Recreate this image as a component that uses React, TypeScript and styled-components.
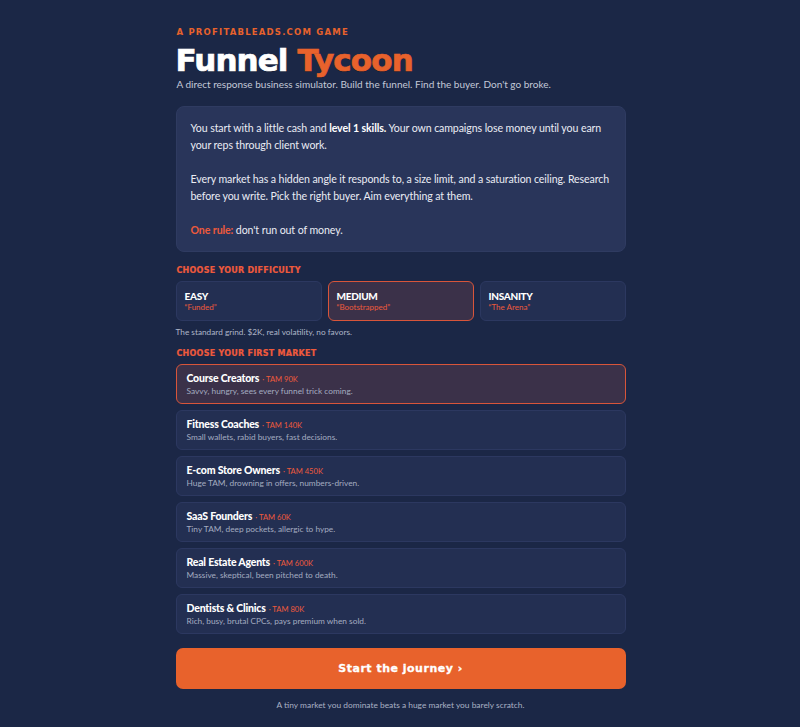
import React, { useState } from "react";
import styled, { createGlobalStyle } from "styled-components";

const GlobalStyle = createGlobalStyle`
  html, body {
    margin: 0;
    padding: 0;
    background: #1b2746;
  }
  body {
    font-family: Lato, "Noto Sans", sans-serif;
    color: #e6e9f2;
    -webkit-font-smoothing: antialiased;
  }
  * { box-sizing: border-box; }
`;

const ORANGE = "#e8622c";
const RED = "#ee5a3c";

const Page = styled.main`
  width: 451px;
  margin: 0 auto;
  padding: 26px 0 14px 1px;
  display: flex;
  flex-direction: column;
`;

const Eyebrow = styled.div`
  font-family: "DejaVu Sans", sans-serif;
  font-weight: 700;
  font-size: 8.5px;
  letter-spacing: 1.2px;
  color: ${ORANGE};
  padding-left: 1px;
  line-height: 12px;
`;

const Title = styled.h1`
  margin: 5px 0 0;
  font-family: "DejaVu Sans", sans-serif;
  font-weight: 700;
  font-size: 31px;
  line-height: 34px;
  letter-spacing: -0.9px;
  color: #ffffff;
  -webkit-text-stroke: 0.7px currentColor;
  text-shadow: 0 1px 0 rgba(0, 0, 0, 0.35);
`;

const Accent = styled.span`
  color: ${ORANGE};
`;

const Subtitle = styled.p`
  margin: 0;
  font-size: 10px;
  line-height: 14px;
  color: #c3c9d8;
  padding-left: 1px;
`;

const Intro = styled.section`
  margin-top: 15px;
  background: #29355a;
  border: 1px solid #2f3b61;
  border-radius: 8px;
  padding: 13px 14px 12px;
  font-size: 10.6px;
  line-height: 17px;
  letter-spacing: -0.1px;
  color: #e9ecf4;
`;

const IntroPara = styled.p`
  margin: 0 0 17px;
  &:last-child { margin-bottom: 0; }
`;

const Strong = styled.strong`
  font-weight: 700;
  color: #ffffff;
`;

const Rule = styled.strong`
  font-weight: 700;
  color: ${RED};
`;

const SectionLabel = styled.h2<{ $top: number }>`
  margin: ${(p) => p.$top}px 0 5px;
  font-family: "DejaVu Sans", sans-serif;
  font-weight: 700;
  font-size: 8px;
  line-height: 11px;
  letter-spacing: 0.25px;
  color: ${RED};
  padding-left: 1px;
  -webkit-text-stroke: 0.2px currentColor;
`;

const DifficultyGrid = styled.div`
  display: grid;
  grid-template-columns: repeat(3, 1fr);
  gap: 6px;
`;

const Card = styled.button<{ $active?: boolean }>`
  all: unset;
  box-sizing: border-box;
  cursor: pointer;
  display: flex;
  flex-direction: column;
  justify-content: center;
  border-radius: 6px;
  border: 1px solid ${(p) => (p.$active ? "#d8553a" : "#2c3860")};
  background: ${(p) => (p.$active ? "#3b3149" : "#232f52")};
`;

const DiffCard = styled(Card)`
  height: 40px;
  padding: 0 8px;
`;

const DiffName = styled.div`
  font-size: 10px;
  font-weight: 900;
  color: #ffffff;
  line-height: 12px;
  letter-spacing: -0.3px;
`;

const DiffTag = styled.div`
  font-size: 8px;
  color: ${RED};
  line-height: 10px;
`;

const Hint = styled.p`
  margin: 6px 0 0;
  font-size: 8.25px;
  line-height: 11px;
  color: #aeb6c8;
`;

const MarketList = styled.div`
  display: flex;
  flex-direction: column;
  gap: 6px;
`;

const MarketCard = styled(Card)`
  height: 40px;
  padding: 0 10px;
`;

const MarketHead = styled.div`
  display: flex;
  align-items: baseline;
  gap: 3px;
  line-height: 13px;
`;

const MarketName = styled.span`
  font-size: 10.5px;
  font-weight: 900;
  color: #ffffff;
  letter-spacing: -0.2px;
`;

const Tam = styled.span`
  font-size: 7.6px;
  color: ${RED};
`;

const MarketDesc = styled.div`
  font-size: 8.3px;
  line-height: 11px;
  color: #a4acc0;
`;

const StartButton = styled.button`
  all: unset;
  box-sizing: border-box;
  cursor: pointer;
  margin-top: 14px;
  height: 41px;
  border-radius: 7px;
  background: ${ORANGE};
  color: #ffffff;
  display: flex;
  align-items: center;
  justify-content: center;
  font-family: "DejaVu Sans", sans-serif;
  font-weight: 700;
  font-size: 11px;
  letter-spacing: 0.5px;
  -webkit-text-stroke: 0.3px currentColor;
`;

const Footnote = styled.p`
  margin: 11px 0 0;
  text-align: center;
  font-size: 8.4px;
  line-height: 11px;
  color: #a9b1c4;
`;

const difficulties = [
  { name: "EASY", tag: "\u201cFunded\u201d" },
  { name: "MEDIUM", tag: "\u201cBootstrapped\u201d" },
  { name: "INSANITY", tag: "\u201cThe Arena\u201d" },
];

const markets = [
  { name: "Course Creators", tam: "90K", desc: "Savvy, hungry, sees every funnel trick coming." },
  { name: "Fitness Coaches", tam: "140K", desc: "Small wallets, rabid buyers, fast decisions." },
  { name: "E-com Store Owners", tam: "450K", desc: "Huge TAM, drowning in offers, numbers-driven." },
  { name: "SaaS Founders", tam: "60K", desc: "Tiny TAM, deep pockets, allergic to hype." },
  { name: "Real Estate Agents", tam: "600K", desc: "Massive, skeptical, been pitched to death." },
  { name: "Dentists & Clinics", tam: "80K", desc: "Rich, busy, brutal CPCs, pays premium when sold." },
];

export default function App() {
  const [difficulty, setDifficulty] = useState(1);
  const [market, setMarket] = useState(0);

  return (
    <>
      <GlobalStyle />
      <Page>
        <Eyebrow>A PROFITABLEADS.COM GAME</Eyebrow>
        <Title>
          Funnel <Accent>Tycoon</Accent>
        </Title>
        <Subtitle>
          A direct response business simulator. Build the funnel. Find the buyer. Don't go broke.
        </Subtitle>

        <Intro>
          <IntroPara>
            You start with a little cash and <Strong>level 1 skills.</Strong> Your own campaigns lose
            money until you earn your reps through client work.
          </IntroPara>
          <IntroPara>
            Every market has a hidden angle it responds to, a size limit, and a saturation ceiling.
            Research before you write. Pick the right buyer. Aim everything at them.
          </IntroPara>
          <IntroPara>
            <Rule>One rule:</Rule> don't run out of money.
          </IntroPara>
        </Intro>

        <SectionLabel $top={13}>CHOOSE YOUR DIFFICULTY</SectionLabel>
        <DifficultyGrid>
          {difficulties.map((d, i) => (
            <DiffCard key={d.name} $active={i === difficulty} onClick={() => setDifficulty(i)}>
              <DiffName>{d.name}</DiffName>
              <DiffTag>{d.tag}</DiffTag>
            </DiffCard>
          ))}
        </DifficultyGrid>
        <Hint>The standard grind. $2K, real volatility, no favors.</Hint>

        <SectionLabel $top={10}>CHOOSE YOUR FIRST MARKET</SectionLabel>
        <MarketList>
          {markets.map((m, i) => (
            <MarketCard key={m.name} $active={i === market} onClick={() => setMarket(i)}>
              <MarketHead>
                <MarketName>{m.name}</MarketName>
                <Tam>· TAM {m.tam}</Tam>
              </MarketHead>
              <MarketDesc>{m.desc}</MarketDesc>
            </MarketCard>
          ))}
        </MarketList>

        <StartButton>Start the journey ›</StartButton>
        <Footnote>A tiny market you dominate beats a huge market you barely scratch.</Footnote>
      </Page>
    </>
  );
}
